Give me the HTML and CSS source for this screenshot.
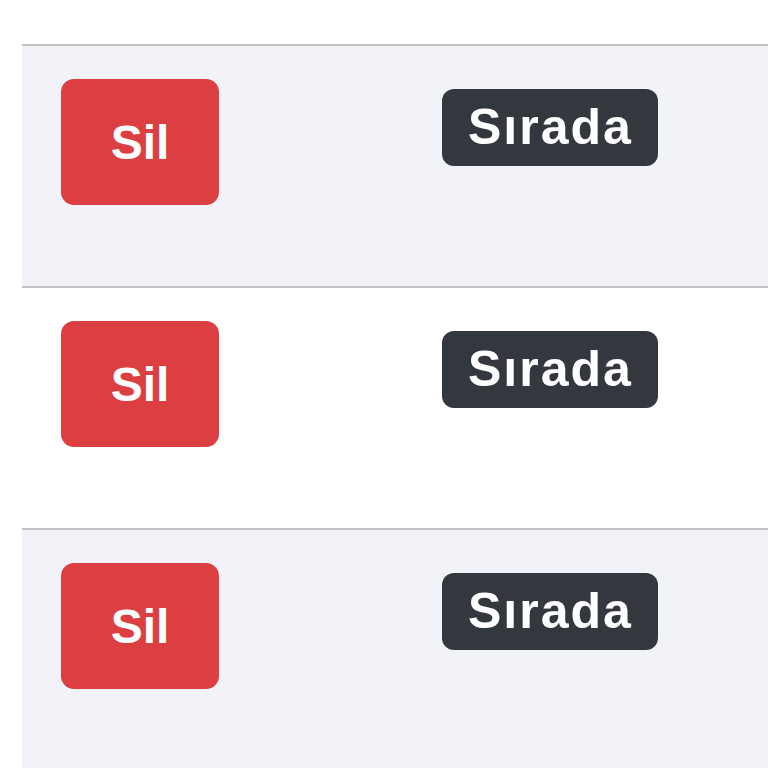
FILE: index.html
```html
<!DOCTYPE html>
<html lang="tr">
<head>
    <meta charset="UTF-8">
    <meta name="viewport" content="width=device-width, initial-scale=1.0">
    <title>Sıra</title>
    <link rel="stylesheet" href="styles.css">
</head>
<body>

    <div class="queue-table">
        <div class="queue-row striped">
            <div class="cell-action">
                <button class="btn-delete">Sil</button>
            </div>
            <div class="cell-status">
                <span class="badge">Sırada</span>
            </div>
        </div>

        <div class="queue-row">
            <div class="cell-action">
                <button class="btn-delete">Sil</button>
            </div>
            <div class="cell-status">
                <span class="badge">Sırada</span>
            </div>
        </div>

        <div class="queue-row striped">
            <div class="cell-action">
                <button class="btn-delete">Sil</button>
            </div>
            <div class="cell-status">
                <span class="badge">Sırada</span>
            </div>
        </div>
    </div>

</body>
</html>
```

FILE: styles.css
```css
body {
    margin: 0;
    background-color: #fff;
    font-family: "Liberation Sans", Arial, sans-serif;
}

.queue-table {
    margin-top: 44px;
    margin-left: 22px;
}

.queue-row {
    display: flex;
    box-sizing: border-box;
    height: 242px;
    border-top: 2px solid #c2c2c4;
    background-color: #fff;
}

.queue-row.striped {
    background-color: #f2f3f8;
}

.cell-action {
    width: 381px;
    padding: 33px 0 0 39px;
    box-sizing: border-box;
}

.cell-status {
    padding-top: 43px;
    padding-left: 39px;
}

.btn-delete {
    width: 158px;
    height: 126px;
    border: none;
    border-radius: 13px;
    background-color: #dc3f42;
    color: #fff;
    font-family: "Liberation Sans", Arial, sans-serif;
    font-weight: bold;
    font-size: 48px;
    padding: 0;
    cursor: pointer;
}

.badge {
    display: inline-block;
    width: 216px;
    height: 77px;
    box-sizing: border-box;
    line-height: 77px;
    padding-left: 26px;
    border-radius: 12px;
    background-color: #33373e;
    color: #fff;
    font-weight: bold;
    font-size: 50px;
    letter-spacing: 2px;
    white-space: nowrap;
}
```
